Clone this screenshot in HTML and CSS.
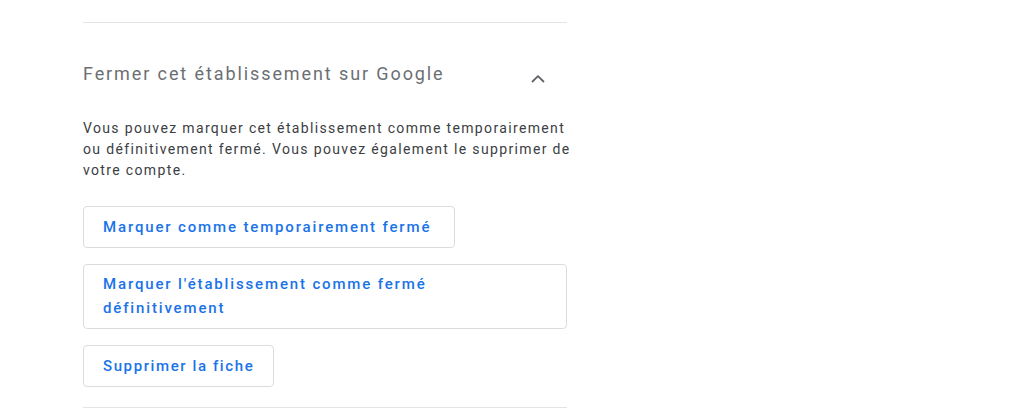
FILE: index.html
```html
<!DOCTYPE html>
<html>
  <head>
    <meta charset="utf-8"/>
    <title>Fermer cet établissement</title>
    <link rel="stylesheet" href="styles.css">
  </head>
  <body>
  <div class="panel">
    <div class="divider"></div>

    <div class="section_head">
      <p class="heading_18">Fermer cet établissement sur Google</p>
      <svg class="chevron" width="14" height="8" viewBox="0 0 14 8">
        <polyline points="1,7 7,1.2 13,7" fill="none" stroke="#5f6368" stroke-width="1.8"/>
      </svg>
    </div>

    <p class="regular_14">Vous pouvez marquer cet établissement comme temporairement ou définitivement fermé. Vous pouvez également le supprimer de votre compte.</p>

    <div class="actions">
      <button class="btn">Marquer comme temporairement fermé</button>
      <button class="btn btn_wide">Marquer l'établissement comme fermé<br/>définitivement</button>
      <button class="btn btn_small">Supprimer la fiche</button>
    </div>

    <div class="divider"></div>
  </div>
</body>
</html>
```

FILE: styles.css
```css
body { margin: 0; background: #fff; font-family: Roboto, "Liberation Sans", sans-serif; }
div.panel { width: 484px; margin-left: 83px; padding-top: 22px; }
div.divider { height: 1px; background: #e3e4e8; }
div.section_head { display: flex; align-items: flex-start; justify-content: space-between; margin-top: 39px; }
p.heading_18 { margin: 0; font-size: 18px; letter-spacing: 1.9px; color: #6b6f74; line-height: 24px; }
.chevron { margin-right: 22px; margin-top: 13px; }
p.regular_14 { margin: 32px -6px 0 0; font-size: 14px; letter-spacing: 1.35px; line-height: 21px; color: #3c4043; }
div.actions { display: flex; flex-direction: column; align-items: flex-start; gap: 16px; margin-top: 25px; margin-bottom: 20px; }
button.btn {
  font-family: Roboto, "Liberation Sans", sans-serif;
  font-size: 15px;
  font-weight: 500;
  letter-spacing: 1.85px;
  color: #1a73e8;
  background: #fff;
  border: 1px solid #dadce0;
  border-radius: 4px;
  padding: 10px 23px 10px 19px;
  line-height: 20px;
  text-align: left;
  cursor: pointer;
}
button.btn_wide { align-self: stretch; line-height: 24px; padding-top: 7px; padding-bottom: 8px; }
button.btn_small { letter-spacing: 1.6px; padding-right: 19px; }
```
